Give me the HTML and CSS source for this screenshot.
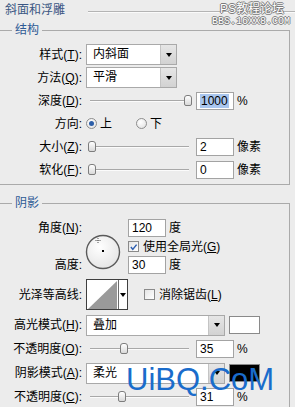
FILE: index.html
```html
<!DOCTYPE html>
<html>
<head>
    <title>斜面和浮雕</title>
    <link rel="stylesheet" href="styles.css">
</head>
<body>
    <div class="panel">
        <div class="title"><span>斜面和浮雕</span></div>

        <fieldset class="group">
            <legend>结构</legend>
            <div class="rows">
                <div class="row">
                    <span class="lbl">样式(<u>T</u>):</span>
                    <div class="select small"><span>内斜面</span><i class="arrow"></i></div>
                </div>
                <div class="row">
                    <span class="lbl">方法(<u>Q</u>):</span>
                    <div class="select small"><span>平滑</span><i class="arrow"></i></div>
                </div>
                <div class="row">
                    <span class="lbl">深度(<u>D</u>):</span>
                    <div class="slider"><i class="thumb" style="left: 98px"></i></div>
                    <div class="num"><span class="sel">1000</span></div>
                    <span class="unit">%</span>
                </div>
                <div class="row">
                    <span class="lbl">方向:</span>
                    <span class="radio on"></span><span class="opt">上</span>
                    <span class="radio second"></span><span class="opt">下</span>
                </div>
                <div class="row">
                    <span class="lbl">大小(<u>Z</u>):</span>
                    <div class="slider"><i class="thumb" style="left: 2px"></i></div>
                    <div class="num">2</div>
                    <span class="unit">像素</span>
                </div>
                <div class="row">
                    <span class="lbl">软化(<u>F</u>):</span>
                    <div class="slider"><i class="thumb" style="left: 2px"></i></div>
                    <div class="num">0</div>
                    <span class="unit">像素</span>
                </div>
            </div>
        </fieldset>

        <fieldset class="group shade">
            <legend>阴影</legend>
            <div class="angle">
                <span class="lbl a1">角度(<u>N</u>):</span>
                <svg class="dial" width="36" height="36" viewBox="0 0 36 36">
                    <defs>
                        <radialGradient id="dialFill" cx="0.4" cy="0.35" r="0.7">
                            <stop offset="0" stop-color="#ffffff"/>
                            <stop offset="1" stop-color="#e4e4e4"/>
                        </radialGradient>
                    </defs>
                    <circle cx="18" cy="18" r="16.5" fill="url(#dialFill)" stroke="#5a5a5a" stroke-width="1.4"/>
                    <path d="M13 4v5M10.5 6.5h5" stroke="#555" stroke-width="1" stroke-dasharray="1 1"/>
                    <rect x="17" y="16" width="2" height="2" fill="#000"/>
                </svg>
                <div class="num a1v">120</div><span class="unit a1u">度</span>
                <div class="check-line">
                    <span class="check on">
                        <svg width="10" height="10" viewBox="0 0 10 10"><path d="M2 5l2 2.5 4-5" fill="none" stroke="#2e5fb0" stroke-width="1.6"/></svg>
                    </span>
                    <span>使用全局光(<u>G</u>)</span>
                </div>
                <span class="lbl a3">高度:</span>
                <div class="num a3v">30</div><span class="unit a3u">度</span>
            </div>

            <div class="row contour-row">
                <span class="lbl">光泽等高线:</span>
                <div class="contour">
                    <svg width="31" height="29" viewBox="0 0 31 29">
                        <rect width="31" height="29" fill="#fff"/>
                        <polygon points="1,29 30,1 30,29" fill="#9a9a9a"/>
                    </svg>
                    <i class="arrow flat"></i>
                </div>
                <span class="check"></span>
                <span>消除锯齿(<u>L</u>)</span>
            </div>

            <div class="row mode">
                <span class="lbl">高光模式(<u>H</u>):</span>
                <div class="select wide"><span>叠加</span><i class="arrow"></i></div>
                <span class="swatch"></span>
            </div>
            <div class="row mode">
                <span class="lbl">不透明度(<u>O</u>):</span>
                <div class="slider"><i class="thumb" style="left: 34px"></i></div>
                <div class="num">35</div>
                <span class="unit">%</span>
            </div>
            <div class="row mode">
                <span class="lbl">阴影模式(<u>A</u>):</span>
                <div class="select wide"><span>柔光</span><i class="arrow"></i></div>
                <span class="swatch dark"></span>
            </div>
            <div class="row mode">
                <span class="lbl">不透明度(<u>C</u>):</span>
                <div class="slider"><i class="thumb" style="left: 32px"></i></div>
                <div class="num">31</div>
                <span class="unit">%</span>
            </div>
        </fieldset>

        <div class="mark-top">
            <div class="mark-cn">PS教程论坛</div>
            <div class="mark-en">BBS.16XX8.COM</div>
        </div>
        <div class="mark-bottom">UiBQ.CoM</div>
    </div>
</body>
</html>
```

FILE: styles.css
```css
body {
    margin: 0;
    padding: 0;
    background-color: #ececec;
    font-family: "Liberation Sans", "Noto Sans CJK SC", sans-serif;
    font-size: 12px;
    line-height: 16px;
    color: #000;
}

.panel {
    position: relative;
    width: 295px;
    height: 407px;
    overflow: hidden;
    background-color: #ececec;
}

.title {
    display: flex;
    align-items: center;
    height: 20px;
    padding-left: 5px;
    color: #3a5683;
}

.title::after {
    content: "";
    flex: 1;
    height: 0;
    margin-left: 23px;
    margin-top: 4px;
    border-top: 1px solid #b4b4b4;
    border-bottom: 1px solid #fafafa;
}

/* group boxes */
.group {
    margin: 2px 5px 0 0;
    padding: 0 0 3px 0;
    border: 1px solid #aaaaaa;
    border-left: none;
    min-width: 0;
}

.group legend {
    margin-left: 12px;
    padding: 0 3px;
    color: #2e5a95;
    line-height: 16px;
}

.shade {
    margin-top: 10px;
    padding-bottom: 10px;
}

.rows {
    margin-top: 5px;
}

.row {
    display: flex;
    align-items: center;
    height: 23px;
}

.lbl {
    flex: none;
    width: 82px;
    text-align: right;
    white-space: nowrap;
}

u {
    text-decoration: underline;
    text-underline-offset: 1px;
}

/* drop-down */
.select {
    display: flex;
    box-sizing: border-box;
    height: 21px;
    margin-left: 4px;
    border: 1px solid #a9a9a9;
    background-color: #fff;
}

.select span {
    flex: 1;
    padding-left: 6px;
    line-height: 19px;
}

.select.small {
    width: 91px;
}

.select.wide {
    width: 139px;
}

.arrow {
    display: flex;
    align-items: center;
    justify-content: center;
    width: 15px;
    background: linear-gradient(#e6e6e6, #d2d2d2);
    border-left: 1px solid #c4c4c4;
}

.arrow::after {
    content: "";
    border-top: 4px solid #000;
    border-left: 3px solid transparent;
    border-right: 3px solid transparent;
}

.arrow.flat {
    width: 8px;
    background: #fff;
    border-left: 1px solid #6a6a6a;
}

/* slider */
.slider {
    position: relative;
    flex: none;
    width: 107px;
    height: 12px;
    margin-left: 4px;
}

.slider::before {
    content: "";
    position: absolute;
    left: 4px;
    right: 4px;
    top: 5px;
    border-top: 1px solid #a8a8a8;
    border-bottom: 1px solid #fbfbfb;
}

.thumb {
    position: absolute;
    top: 0;
    box-sizing: border-box;
    width: 8px;
    height: 11px;
    border: 1px solid #7d7d7d;
    border-radius: 3px 3px 2px 2px;
    background: linear-gradient(#ffffff, #d9d9d9);
}

/* number fields */
.num {
    flex: none;
    box-sizing: border-box;
    width: 38px;
    height: 18px;
    margin-left: 3px;
    padding-left: 3px;
    border: 1px solid #a3a3a3;
    background-color: #fff;
    line-height: 16px;
}

.sel {
    background-color: #a9c6ee;
    padding: 0 1px;
}

.unit {
    margin-left: 3px;
}

/* radio */
.radio {
    position: relative;
    box-sizing: border-box;
    width: 11px;
    height: 11px;
    margin-left: 4px;
    border: 1px solid #8d8d8d;
    border-radius: 50%;
    background: radial-gradient(circle at 40% 35%, #ffffff, #dedede);
}

.radio.on::after {
    content: "";
    position: absolute;
    left: 2px;
    top: 2px;
    width: 5px;
    height: 5px;
    border-radius: 50%;
    background-color: #2c5ea8;
}

.radio.second {
    margin-left: 24px;
}

.opt {
    margin-left: 3px;
}

/* angle block */
.angle {
    display: grid;
    grid-template-columns: 82px 46px auto auto 1fr;
    grid-template-rows: 18px 19px 18px;
    align-items: center;
    margin-top: 8px;
}

.a1 { grid-row: 1; grid-column: 1; }
.a3 { grid-row: 3; grid-column: 1; }
.a1v { grid-row: 1; grid-column: 3; margin-left: 0; }
.a1u { grid-row: 1; grid-column: 4; }
.a3v { grid-row: 3; grid-column: 3; margin-left: 0; }
.a3u { grid-row: 3; grid-column: 4; }

.dial {
    grid-row: 1 / 4;
    grid-column: 2;
    margin: 10px 0 0 3px;
}

.check-line {
    grid-row: 2;
    grid-column: 3 / 6;
    display: flex;
    align-items: center;
}

.check {
    display: inline-flex;
    box-sizing: border-box;
    width: 11px;
    height: 11px;
    margin-right: 4px;
    border: 1px solid #8a8a8a;
    background: linear-gradient(135deg, #e4e4e4, #ffffff);
}

.check svg {
    margin: 0 0 0 -0.5px;
}

/* contour */
.contour-row {
    height: 31px;
    margin-top: 5px;
}

.contour {
    display: flex;
    box-sizing: border-box;
    height: 31px;
    margin-left: 4px;
    margin-right: 16px;
    border: 1px solid #3f3f3f;
    background-color: #fff;
}

.mode {
    height: 24px;
}

.contour-row + .mode {
    margin-top: 3px;
}

.swatch {
    box-sizing: border-box;
    width: 31px;
    height: 18px;
    margin-left: 4px;
    border: 1px solid #8a8a8a;
    background-color: #fff;
}

.swatch.dark {
    background-color: #000;
}

/* watermarks */
.mark-top {
    position: absolute;
    top: 2px;
    right: 5px;
    text-align: right;
    color: #fff;
    text-shadow: 1px 0 #7a7a7a, -1px 0 #7a7a7a, 0 1px #7a7a7a, 0 -1px #7a7a7a;
}

.mark-cn {
    font-size: 12px;
    line-height: 14px;
    margin-right: 6px;
}

.mark-en {
    font-family: "Liberation Mono", monospace;
    font-size: 10px;
    line-height: 11px;
}

.mark-bottom {
    position: absolute;
    left: 126px;
    top: 362px;
    font-family: "Liberation Sans", sans-serif;
    font-size: 31px;
    line-height: 36px;
    color: #1a6ccb;
}
```
